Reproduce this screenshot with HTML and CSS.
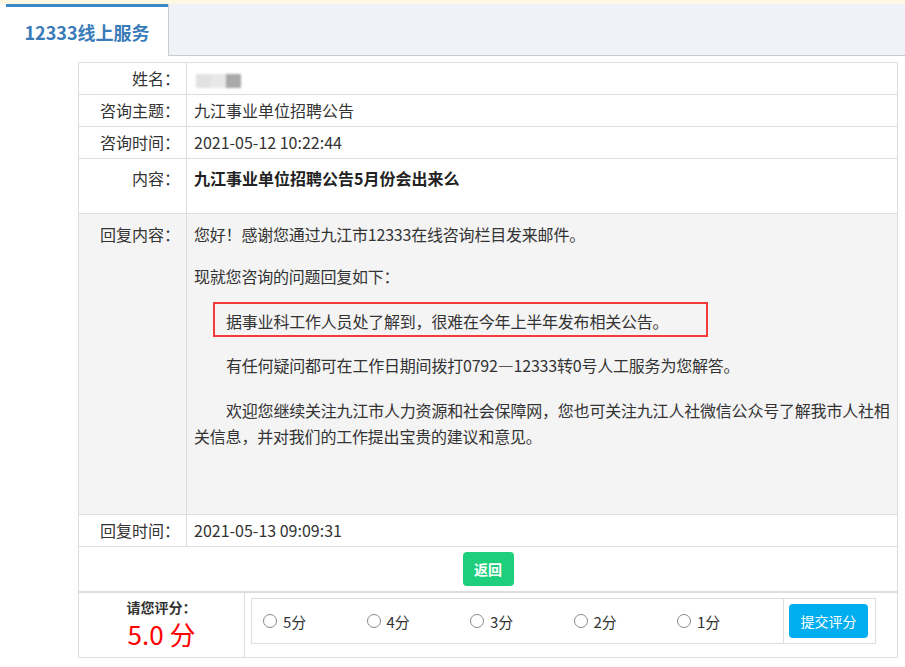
FILE: index.html
```html
<!DOCTYPE html>
<html lang="zh-CN">
<head>
    <meta charset="UTF-8">
    <title>12333线上服务</title>
    <link rel="stylesheet" href="styles.css">
</head>
<body>
<div class="topline"></div>
<div class="tabbar">
    <div class="tab">12333线上服务</div>
    <div class="tab-rest"></div>
</div>

<!-- 咨询详情 -->
<table class="detail">
    <tr>
        <td class="label">姓名：</td>
        <td class="value">
            <span class="blur"><i class="b1"></i><i class="b2"></i><i class="b3"></i></span>
        </td>
    </tr>
    <tr>
        <td class="label">咨询主题：</td>
        <td class="value">九江事业单位招聘公告</td>
    </tr>
    <tr>
        <td class="label">咨询时间：</td>
        <td class="value">2021-05-12 10:22:44</td>
    </tr>
    <tr class="content-row">
        <td class="label">内容：</td>
        <td class="value"><b>九江事业单位招聘公告5月份会出来么</b></td>
    </tr>
    <tr class="reply-row">
        <td class="label">回复内容：</td>
        <td class="value">
            <div class="reply">
                <p class="first">您好！感谢您通过九江市12333在线咨询栏目发来邮件。</p>
                <p>现就您咨询的问题回复如下：</p>
                <p class="marked">据事业科工作人员处了解到，很难在今年上半年发布相关公告。</p>
                <p class="indent">有任何疑问都可在工作日期间拨打0792—12333转0号人工服务为您解答。</p>
                <p class="indent">欢迎您继续关注九江市人力资源和社会保障网，您也可关注九江人社微信公众号了解我市人社相关信息，并对我们的工作提出宝贵的建议和意见。</p>
            </div>
        </td>
    </tr>
    <tr>
        <td class="label">回复时间：</td>
        <td class="value">2021-05-13 09:09:31</td>
    </tr>
    <tr class="back-row">
        <td colspan="2"><button type="button" class="btn-back">返回</button></td>
    </tr>
</table>

<!-- 评分 -->
<table class="rating">
    <tr>
        <td class="score">
            <div class="score-title">请您评分：</div>
            <div class="score-num">5.0 分</div>
        </td>
        <td class="choose">
            <div class="choose-box">
                <div class="options">
                    <label class="opt"><span class="radio"></span>5分</label>
                    <label class="opt"><span class="radio"></span>4分</label>
                    <label class="opt"><span class="radio"></span>3分</label>
                    <label class="opt"><span class="radio"></span>2分</label>
                    <label class="opt"><span class="radio"></span>1分</label>
                </div>
                <div class="submit">
                    <button type="button" class="btn-submit">提交评分</button>
                </div>
            </div>
        </td>
    </tr>
</table>
</body>
</html>
```

FILE: styles.css
```css
body {
    margin: 0;
    font-family: "Microsoft YaHei", "Noto Sans CJK SC", sans-serif;
    font-size: 16px;
    color: #333;
    background: #fff;
}
.topline {
    height: 4px;
    background: #fdf8e3;
}
.tabbar {
    display: flex;
    padding-left: 6px;
    height: 52px;
}
.tab {
    width: 162px;
    height: 49px;
    border-top: 3px solid #3b88c8;
    padding-top: 2px;
    line-height: 46px;
    text-align: center;
    font-size: 18px;
    font-weight: bold;
    color: #3a7bb9;
}
.tab-rest {
    flex: 1;
    background: #eff3f8;
    border-left: 1px solid #ccc;
    border-bottom: 1px solid #ccc;
}

/* tables */
table {
    border-collapse: collapse;
    width: 820px;
    margin-left: 78px;
}
.detail {
    margin-top: 6px;
}
.detail td, .rating td {
    border: 1px solid #ddd;
}
.detail td {
    padding: 5px 7px 5px 7px;
    line-height: 21px;
    vertical-align: top;
}
.detail .label {
    width: 96px;
    text-align: right;
    padding-right: 6px;
    padding-left: 5px;
    white-space: nowrap;
}
.content-row td {
    padding-top: 9px;
    padding-bottom: 24px;
}
.content-row b {
    font-weight: bold;
    color: #222;
}
.reply-row td {
    background: #f4f4f4;
    padding-top: 7px;
    padding-bottom: 0;
    line-height: 26px;
}
.reply-row .value {
    padding-right: 2px;
}
.reply {
    height: 293px;
    letter-spacing: -0.2px;
}
.reply p {
    margin: 0 0 19px;
}
.reply p.first {
    margin-bottom: 16px;
}
.reply .indent {
    text-indent: 2em;
}
.reply .marked {
    width: fit-content;
    margin: -6px 0 15px 19px;
    border: 2px solid #f43b3b;
    padding: 4px 38px 1px 11px;
}
.back-row td {
    text-align: center;
    padding: 5px 0;
}
.btn-back {
    width: 51px;
    height: 34px;
    border: none;
    border-radius: 4px;
    background: #1dce7b;
    color: #fff;
    font-family: inherit;
    font-size: 14px;
    font-weight: bold;
    display: inline-block;
    vertical-align: top;
}

/* name placeholder */
.blur {
    display: inline-flex;
    margin-top: 6px;
    filter: blur(0.8px);
    vertical-align: top;
}
.blur i {
    width: 15px;
    height: 14px;
}
.blur .b1 { background: #e2e2e2; margin-left: 2px; }
.blur .b2 { background: #e8e8e8; }
.blur .b3 { background: #a9a9a9; }

/* rating */
.rating td {
    vertical-align: top;
}
.score {
    width: 165px;
    padding: 4px 0 0;
    text-align: center;
}
.score-title {
    font-size: 14px;
    font-weight: bold;
    line-height: 20px;
}
.score-num {
    font-size: 26px;
    line-height: 30px;
    margin-top: 2px;
    color: #f00;
}
.choose {
    padding: 5px 21px 13px 6px;
}
.choose-box {
    display: flex;
    height: 44px;
    border: 1px solid #ddd;
}
.options {
    flex: 1;
    display: flex;
    align-items: center;
    padding-left: 11px;
    font-size: 15px;
}
.opt {
    width: 103.5px;
    display: flex;
    align-items: center;
}
.radio {
    width: 12px;
    height: 12px;
    border: 1px solid #8a8a8a;
    border-radius: 50%;
    background: #fff;
    margin-right: 6px;
}
.submit {
    width: 86px;
    border-left: 1px solid #ddd;
    display: flex;
    align-items: center;
    padding-left: 5px;
}
.btn-submit {
    width: 79px;
    height: 34px;
    border: none;
    border-radius: 4px;
    background: #00aeef;
    color: #fff;
    font-family: inherit;
    font-size: 14px;
}
```
